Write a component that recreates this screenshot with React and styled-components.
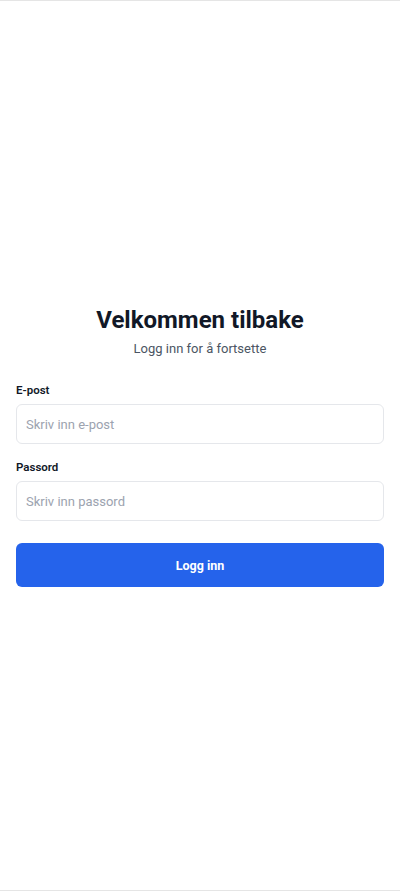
import React from "react";
import styled, { createGlobalStyle } from "styled-components";

const Global = createGlobalStyle`
  html, body { margin: 0; padding: 0; background: #fff; }
  body { font-family: Roboto, "Noto Sans", sans-serif; }
  * { box-sizing: border-box; }
`;

const Screen = styled.div`
  height: 891px;
  border-top: 1px solid #e5e5e5;
  border-bottom: 1px solid #e5e5e5;
  display: flex;
  flex-direction: column;
  justify-content: center;
  padding: 0 16px;
`;

const Header = styled.div`
  display: flex;
  flex-direction: column;
  align-items: center;
  margin-bottom: 23px;
`;

const Title = styled.h1`
  margin: 0;
  font-size: 24px;
  line-height: 32px;
  font-weight: 700;
  color: #111827;
`;

const Subtitle = styled.p`
  margin: 3px 0 0;
  font-size: 13px;
  line-height: 20px;
  color: #4b5563;
`;

const Field = styled.div`
  display: flex;
  flex-direction: column;
  gap: 6px;
  margin-bottom: ${(p) => (p.$last ? "22px" : "15px")};
`;

const Label = styled.label`
  font-size: 11.5px;
  line-height: 16px;
  font-weight: 600;
  color: #111827;
`;

const Input = styled.input`
  height: 40px;
  border: 1px solid #e5e7eb;
  border-radius: 6px;
  padding: 0 9px;
  font-family: inherit;
  font-size: 13px;
  color: #111827;
  outline: none;
  &::placeholder { color: #9ca3af; }
`;

const Button = styled.button`
  height: 44px;
  border: none;
  border-radius: 6px;
  background: #2563eb;
  color: #fff;
  font-family: inherit;
  font-size: 12.5px;
  font-weight: 700;
`;

export default function App() {
  return (
    <>
      <Global />
      <Screen>
        <Header>
          <Title>Velkommen tilbake</Title>
          <Subtitle>Logg inn for å fortsette</Subtitle>
        </Header>
        <Field>
          <Label>E-post</Label>
          <Input placeholder="Skriv inn e-post" />
        </Field>
        <Field $last>
          <Label>Passord</Label>
          <Input type="password" placeholder="Skriv inn passord" />
        </Field>
        <Button>Logg inn</Button>
      </Screen>
    </>
  );
}
